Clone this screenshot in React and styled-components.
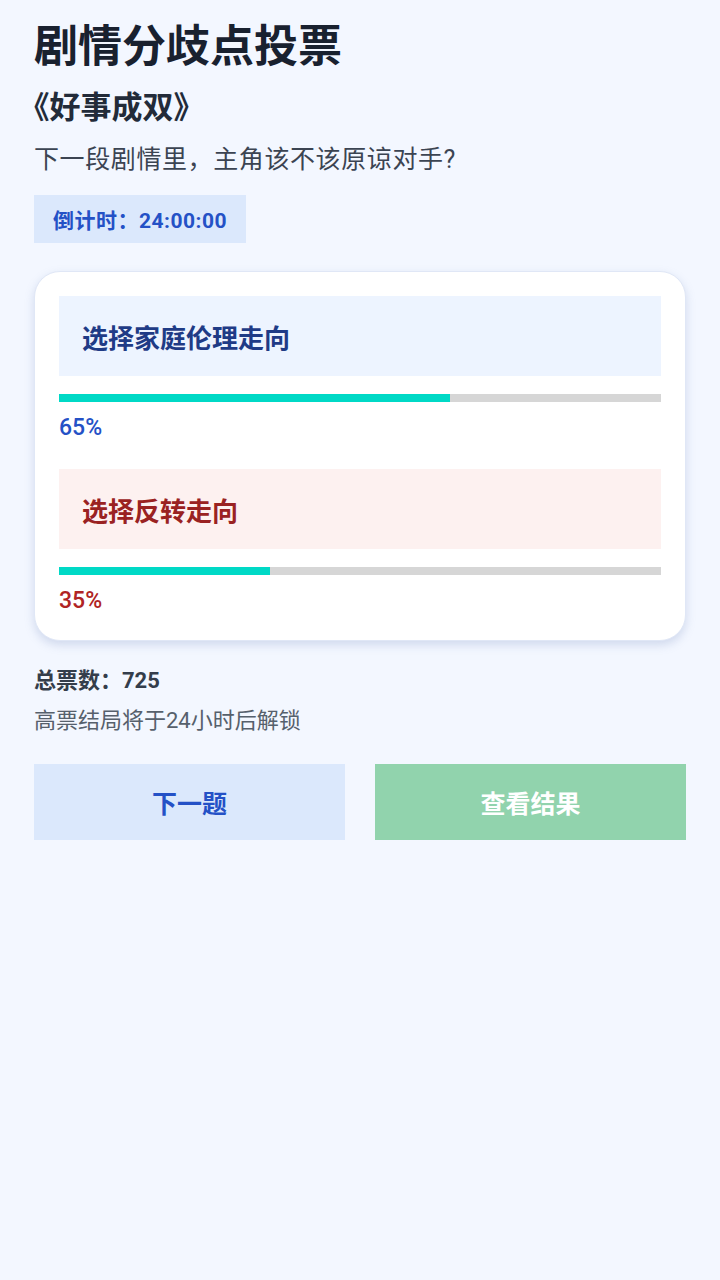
import React from "react";
import styled, { createGlobalStyle } from "styled-components";

const GlobalStyle = createGlobalStyle`
  html, body {
    margin: 0;
    padding: 0;
    background: #f3f7ff;
  }
  body {
    font-family: Roboto, "Noto Sans CJK SC", sans-serif;
  }
`;

const Page = styled.div`
  min-height: 1280px;
  padding: 17px 34px 40px 34px;
  box-sizing: border-box;
  background: #f3f7ff;
  display: flex;
  flex-direction: column;
`;

const Title = styled.h1`
  margin: 0;
  font-size: 44px;
  line-height: 60px;
  font-weight: 700;
  color: #19212f;
`;

const Drama = styled.h2`
  margin: 11px 0 0 0;
  font-size: 31px;
  line-height: 40px;
  font-weight: 700;
  color: #222b39;
  font-feature-settings: "halt";
`;

const Question = styled.p`
  margin: 15px 0 0 0;
  font-size: 25px;
  line-height: 34px;
  letter-spacing: 0.6px;
  color: #3b4452;
`;

const Countdown = styled.div`
  align-self: flex-start;
  margin-top: 18px;
  padding: 0 19px;
  height: 48px;
  display: flex;
  align-items: center;
  background: #dbe8fc;
  color: #2451c6;
  font-size: 21px;
  font-weight: 700;
  letter-spacing: 0.5px;
`;

const Card = styled.div`
  margin-top: 28px;
  background: #fff;
  border-radius: 26px;
  border: 1px solid #e0e7f6;
  box-shadow: 0 4px 10px rgba(120, 140, 190, 0.28);
  padding: 24px 24px 26px 24px;
  display: flex;
  flex-direction: column;
  gap: 28px;
`;

const Option = styled.div`
  display: flex;
  flex-direction: column;
`;

const OptionBox = styled.div`
  height: 80px;
  display: flex;
  align-items: center;
  padding: 0 23px;
  background: ${({ $tone }) => ($tone === "red" ? "#fdf1f0" : "#edf4ff")};
  color: ${({ $tone }) => ($tone === "red" ? "#9a2222" : "#1f3b86")};
  font-size: 26px;
  font-weight: 700;
`;

const Track = styled.div`
  margin-top: 18px;
  height: 8px;
  background: #d6d6d6;
`;

const Fill = styled.div`
  height: 100%;
  background: #00d9c6;
`;

const Percent = styled.div`
  margin-top: 13px;
  font-size: 23px;
  line-height: 26px;
  font-weight: 500;
  color: ${({ $tone }) => ($tone === "red" ? "#b02424" : "#2451c6")};
`;

const Total = styled.div`
  margin-top: 25px;
  font-size: 22px;
  line-height: 30px;
  font-weight: 700;
  color: #343d4b;
`;

const Note = styled.div`
  margin-top: 10px;
  font-size: 22px;
  line-height: 30px;
  color: #56606c;
`;

const Buttons = styled.div`
  margin-top: 28px;
  display: grid;
  grid-template-columns: 1fr 1fr;
  gap: 30px;
`;

const Button = styled.button`
  height: 76px;
  border: none;
  font-family: inherit;
  font-size: 25px;
  font-weight: 700;
  background: ${({ $primary }) => ($primary ? "#91d3ad" : "#dbe8fc")};
  color: ${({ $primary }) => ($primary ? "#ffffff" : "#2451c6")};
`;

const options = [
  { label: "选择家庭伦理走向", pct: 65, tone: "blue" },
  { label: "选择反转走向", pct: 35, tone: "red" },
];

export default function App() {
  return (
    <>
      <GlobalStyle />
      <Page>
        <Title>剧情分歧点投票</Title>
        <Drama>《好事成双》</Drama>
        <Question>下一段剧情里，主角该不该原谅对手?</Question>
        <Countdown>倒计时：24:00:00</Countdown>
        <Card>
          {options.map((o) => (
            <Option key={o.label}>
              <OptionBox $tone={o.tone}>{o.label}</OptionBox>
              <Track>
                <Fill style={{ width: `${o.pct}%` }} />
              </Track>
              <Percent $tone={o.tone}>{o.pct}%</Percent>
            </Option>
          ))}
        </Card>
        <Total>总票数：725</Total>
        <Note>高票结局将于24小时后解锁</Note>
        <Buttons>
          <Button>下一题</Button>
          <Button $primary>查看结果</Button>
        </Buttons>
      </Page>
    </>
  );
}
